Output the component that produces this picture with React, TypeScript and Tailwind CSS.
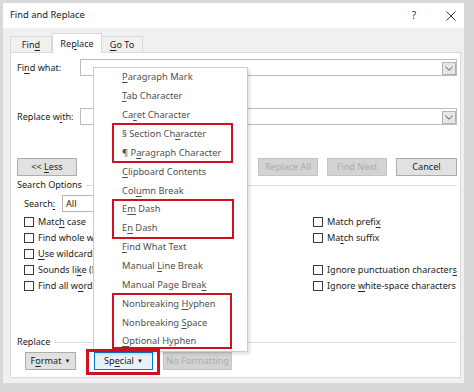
import React from "react";

const Acc = ({ t, i }: { t: string; i?: number }) => {
  if (i === undefined || i < 0) return <span>{t}</span>;
  return (
    <span className="whitespace-pre">
      {t.slice(0, i)}
      <span className="underline underline-offset-[1.5px] decoration-1">{t[i]}</span>
      {t.slice(i + 1)}
    </span>
  );
};

const Chevron = () => (
  <svg width="8" height="5" viewBox="0 0 8 5" className="block">
    <path d="M0.5 0.8 L4 4.2 L7.5 0.8" fill="none" stroke="#555" strokeWidth="1" />
  </svg>
);

const Combo = () => (
  <div className="flex-1 h-[17px] border border-[#bcbcbc] bg-white flex justify-end items-end">
    <div className="w-[14px] h-[13px] border border-[#b3b3b3] bg-[#e6e6e6] flex items-center justify-center">
      <Chevron />
    </div>
  </div>
);

const Btn = ({ children, w, disabled }: { children: React.ReactNode; w: string; disabled?: boolean }) => (
  <div
    className={
      "h-[18px] flex items-center justify-center border whitespace-pre " +
      w +
      (disabled ? " bg-[#d3d3d3] border-[#c4c4c4] text-[#ababab]" : " bg-[#e1e1e1] border-[#adadad] text-[#222]")
    }
  >
    {children}
  </div>
);

const Check = ({ t, i }: { t: string; i?: number }) => (
  <div className="h-[16px] flex items-center gap-[4px] whitespace-nowrap">
    <div className="w-[10px] h-[10px] border border-[#3a3a3a] bg-white shrink-0" />
    <Acc t={t} i={i} />
  </div>
);

const menuItems: [string, number][] = [
  ["Paragraph Mark", 0],
  ["Tab Character", 0],
  ["Caret Character", 2],
  ["§ Section Character", 12],
  ["¶ Paragraph Character", 3],
  ["Clipboard Contents", 0],
  ["Column Break", 3],
  ["Em Dash", 1],
  ["En Dash", 1],
  ["Find What Text", 0],
  ["Manual Line Break", 7],
  ["Manual Page Break", 16],
  ["Nonbreaking Hyphen", 12],
  ["Nonbreaking Space", 12],
  ["Optional Hyphen", 0],
];

export default function App() {
  return (
    <div
      className="relative w-[474px] h-[392px] bg-[#d8d8d8] pt-[3px] pl-[3px] overflow-hidden text-[9.1px] text-[#222]"
      style={{ fontFamily: '"Noto Sans", "Open Sans", sans-serif' }}
    >
      <div className="w-[461px] h-[380px] bg-[#f0f0f0] flex flex-col">
        {/* title bar */}
        <div className="h-[25px] bg-white flex items-center pl-[7px] shrink-0">
          <span className="text-[9.4px] text-[#1a1a1a]">Find and Replace</span>
          <span className="ml-auto text-[10px] text-[#333] mr-[30px]">?</span>
          <svg width="10" height="10" viewBox="0 0 10 10" className="mr-[8px]">
            <path d="M0.5 0.5 L9.5 9.5 M9.5 0.5 L0.5 9.5" stroke="#333" strokeWidth="1" />
          </svg>
        </div>
        {/* tabs */}
        <div className="h-[24px] flex items-end pl-[7px] shrink-0">
          <div className="w-[42px] h-[16px] border border-b-0 border-[#d9d9d9] bg-[#f0f0f0] flex items-center justify-center">
            <Acc t="Find" i={3} />
          </div>
          <div className="relative z-10 -mb-px w-[50px] h-[20px] border border-b-0 border-[#d9d9d9] bg-white flex items-center justify-center">
            <Acc t="Replace" i={2} />
          </div>
          <div className="w-[41px] h-[16px] border border-b-0 border-l-0 border-[#d9d9d9] bg-[#f0f0f0] flex items-center justify-center">
            <Acc t="Go To" i={0} />
          </div>
        </div>
        {/* panel */}
        <div className="flex-1 ml-[7px] mr-[3px] mb-[5px] bg-white border border-[#d9d9d9] pl-[6px] pr-[3px] pt-[6px] flex flex-col">
          <div className="h-[17px] flex items-center">
            <div className="w-[63px]">
              <Acc t="Find what:" i={2} />
            </div>
            <Combo />
          </div>
          <div className="h-[17px] mt-[32px] flex items-center">
            <div className="w-[63px]">
              <Acc t="Replace with:" i={9} />
            </div>
            <Combo />
          </div>
          <div className="h-[18px] mt-[33px] flex">
            <Btn w="w-[60px]">
              <span>&lt;&lt; </span>
              <Acc t="Less" i={0} />
            </Btn>
            <div className="ml-auto flex gap-[9px]">
              <Btn w="w-[60px]" disabled>
                Replace All
              </Btn>
              <Btn w="w-[60px]" disabled>
                Find Next
              </Btn>
              <Btn w="w-[61px]">Cancel</Btn>
            </div>
          </div>
          <div className="h-[12px] mt-[3px] flex items-center">
            <span>Search Options</span>
            <div className="flex-1 h-px bg-[#dcdcdc] ml-[4px]" />
          </div>
          <div className="h-[17px] mt-[4px] flex items-center pl-[7px]">
            <div className="w-[38px]">
              <Acc t="Search:" i={6} />
            </div>
            <div className="w-[112px] h-[17px] border border-[#b5b5b5] flex items-center pl-[3px]">All</div>
          </div>
          <div className="mt-[2px] pl-[7px] grid grid-cols-[289px_1fr]">
            <div className="flex flex-col w-[69px] overflow-hidden">
              <Check t="Match case" i={4} />
              <Check t="Find whole words only" i={20} />
              <Check t="Use wildcards" i={0} />
              <Check t="Sounds like (English)" i={9} />
              <Check t="Find all word forms (English)" i={10} />
            </div>
            <div className="flex flex-col">
              <Check t="Match prefix" i={11} />
              <Check t="Match suffix" i={2} />
              <div className="h-[16px]" />
              <Check t="Ignore punctuation characters" i={28} />
              <Check t="Ignore white-space characters" i={7} />
            </div>
          </div>
          <div className="h-[12px] mt-[42px] flex items-center">
            <span>Replace</span>
            <div className="flex-1 h-px bg-[#dcdcdc] ml-[4px]" />
          </div>
          <div className="h-[18px] mt-[4px] flex pl-[8px]">
            <Btn w="w-[51px] gap-[3px]">
              <Acc t="Format" i={1} />
              <span className="text-[6px]">▼</span>
            </Btn>
            <div className="ml-[18px] w-[59px] h-[18px] flex items-center justify-center border border-[#0078d7] bg-[#e5f1fb] gap-[3px]">
              <Acc t="Special" i={2} />
              <span className="text-[6px]">▼</span>
            </div>
            <div className="ml-[10px]">
              <Btn w="w-[69px]" disabled>
                No Formatting
              </Btn>
            </div>
          </div>
        </div>
      </div>

      {/* dropdown menu */}
      <div className="absolute left-[93px] top-[67px] w-[155px] h-[285px] bg-white border border-[#cccccc] shadow-[2px_2px_3px_rgba(0,0,0,0.12)] flex flex-col text-[#4f4f4f] text-[9.3px]">
        {menuItems.map(([t, i]) => (
          <div key={t} className="h-[18.86px] flex items-center pl-[28px] whitespace-nowrap">
            <Acc t={t} i={i} />
          </div>
        ))}
      </div>

      {/* red highlight boxes */}
      <div className="absolute left-[112px] top-[123px] w-[121px] h-[40px] border-2 border-[#d0101e]" />
      <div className="absolute left-[112px] top-[199px] w-[122px] h-[40px] border-2 border-[#d0101e]" />
      <div className="absolute left-[112px] top-[293px] w-[120px] h-[56px] border-2 border-[#d0101e]" />
      <div className="absolute left-[86px] top-[349px] w-[74px] h-[26px] border-[3px] border-[#d0101e]" />
    </div>
  );
}
